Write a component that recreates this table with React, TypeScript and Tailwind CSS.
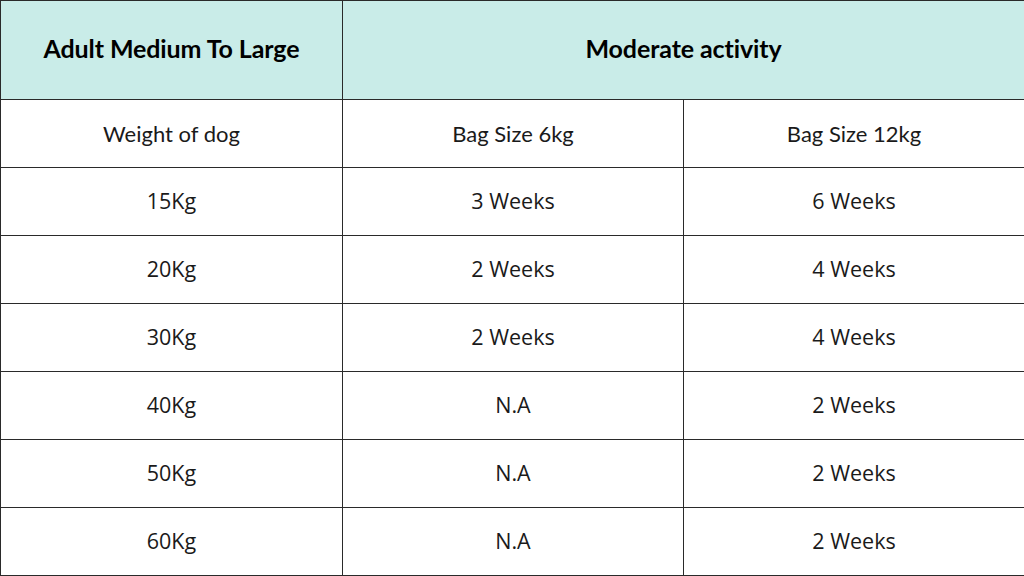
const ROWS: [string, string, string][] = [
  ['15Kg', '3 Weeks', '6 Weeks'],
  ['20Kg', '2 Weeks', '4 Weeks'],
  ['30Kg', '2 Weeks', '4 Weeks'],
  ['40Kg', 'N.A', '2 Weeks'],
  ['50Kg', 'N.A', '2 Weeks'],
  ['60Kg', 'N.A', '2 Weeks'],
];

const cell = 'border border-[#2a2a2a] text-center align-middle p-0';

export default function App() {
  return (
    <div className="w-[1024px] h-[576px] bg-white overflow-hidden">
      <table className="w-[1024px] border-collapse table-fixed text-[#1a1a1a]">
        <colgroup>
          <col className="w-[342px]" />
          <col className="w-[341px]" />
          <col className="w-[341px]" />
        </colgroup>
        <thead>
          <tr className="h-[99px] bg-[#c9ece8]">
            <th className={`${cell} pb-[3px] font-['Lato',sans-serif] font-bold text-[25px] tracking-[-0.1px] text-black`}>Adult Medium To Large</th>
            <th colSpan={2} className={`${cell} pb-[3px] font-['Lato',sans-serif] font-bold text-[25px] tracking-[-0.1px] text-black`}>Moderate activity</th>
          </tr>
        </thead>
        <tbody>
          <tr className="h-[68px] font-['Lato',sans-serif] text-[22px]">
            <td className={cell}>Weight of dog</td>
            <td className={cell}>Bag Size 6kg</td>
            <td className={cell}>Bag Size 12kg</td>
          </tr>
          {ROWS.map(r => (
            <tr key={r[0]} className="h-[68px] font-['Open_Sans',sans-serif] text-[21.5px]">
              <td className={cell}>{r[0]}</td>
              <td className={cell}>{r[1]}</td>
              <td className={cell}>{r[2]}</td>
            </tr>
          ))}
        </tbody>
      </table>
    </div>
  );
}
